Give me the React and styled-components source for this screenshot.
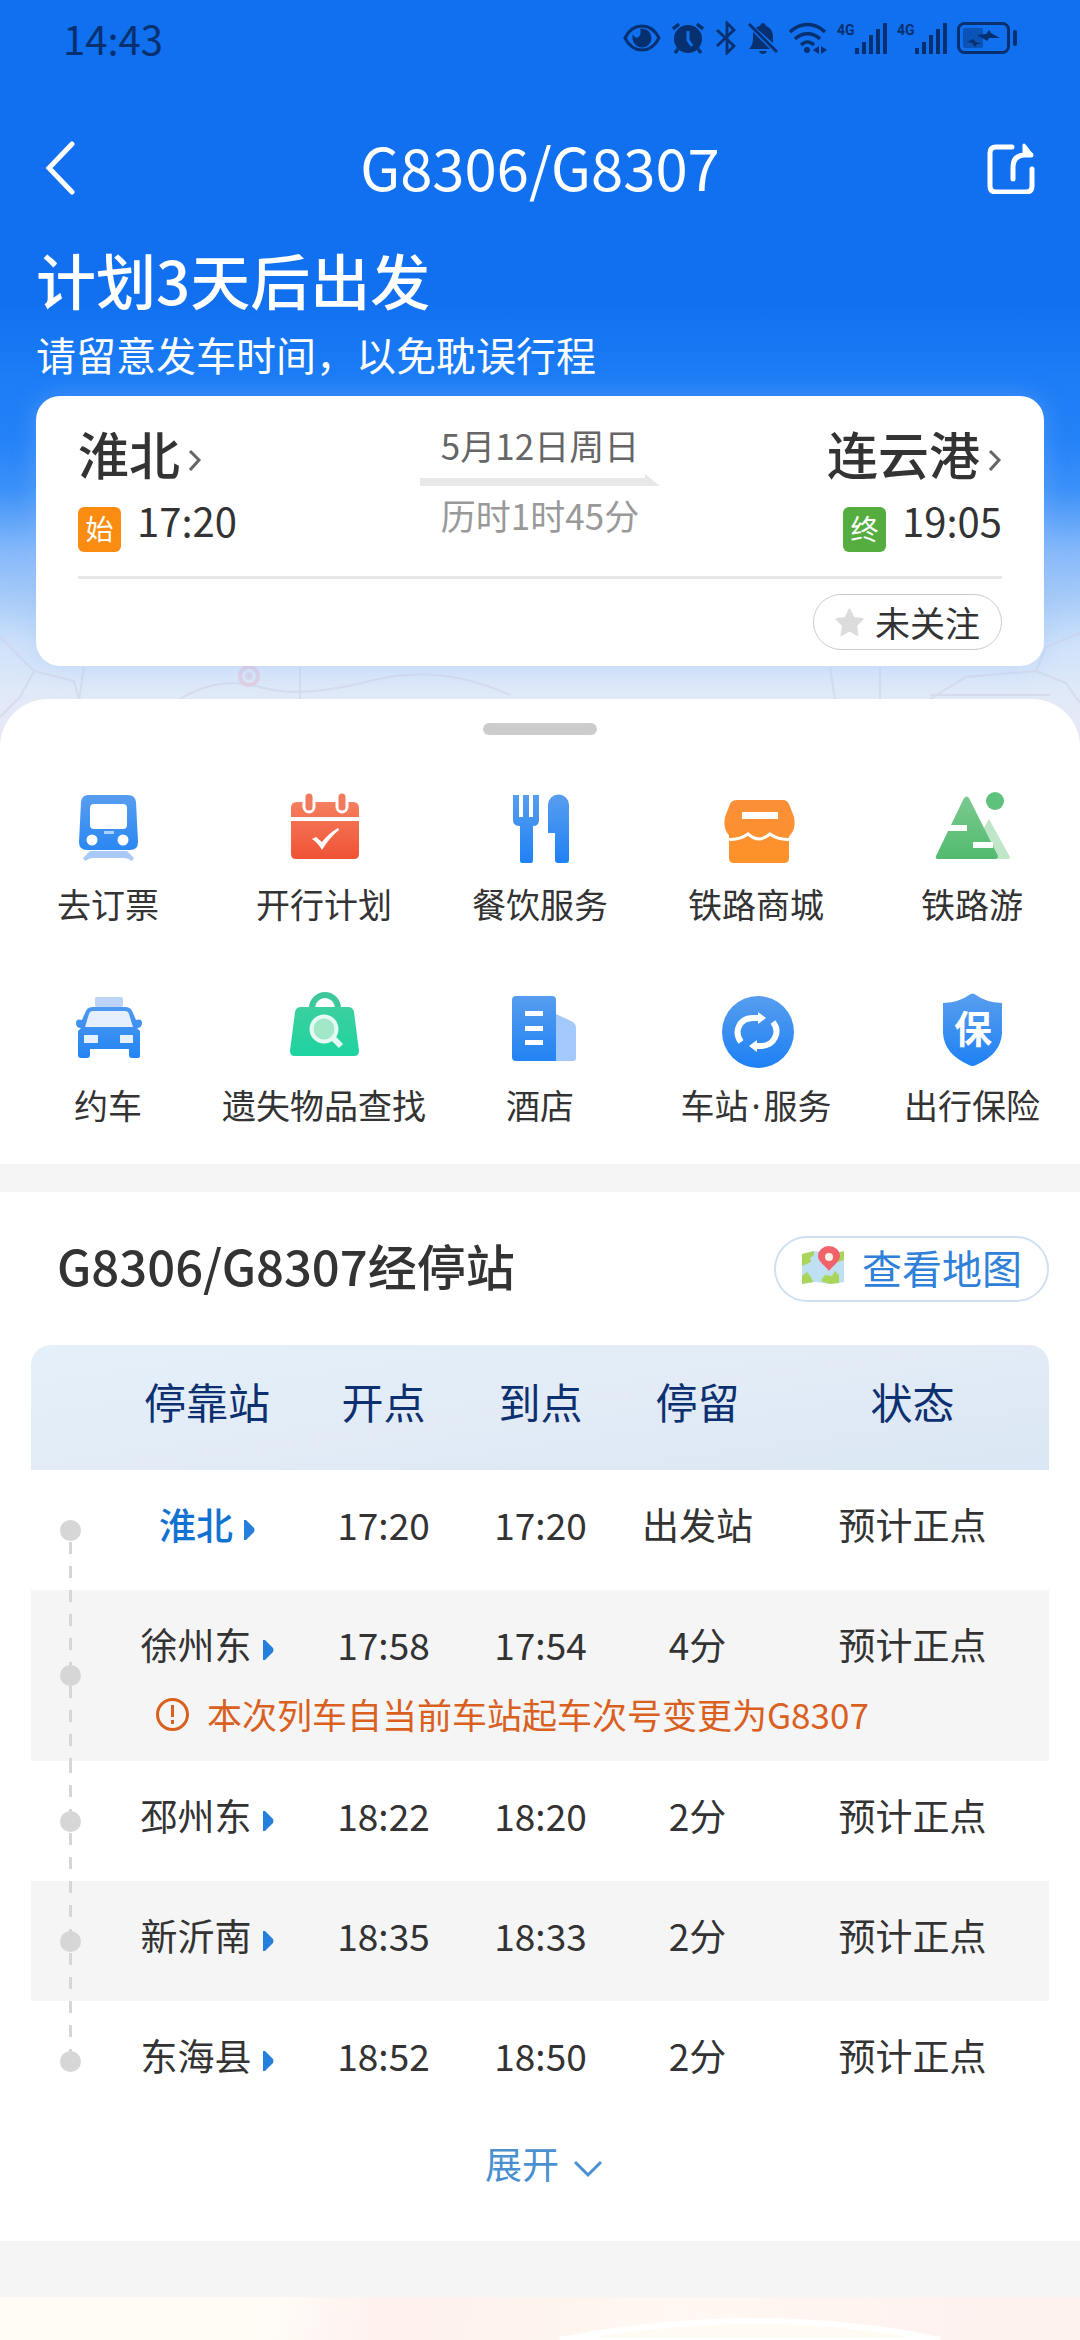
import React from "react";
import styled, { createGlobalStyle } from "styled-components";

const GlobalStyle = createGlobalStyle`
  * { box-sizing: border-box; }
  body {
    margin: 0;
    background: #fff;
    color: #333;
    font-family: "Noto Sans CJK SC", "Noto Sans", sans-serif;
  }
  h1, h2, p { margin: 0; font-weight: 400; }
  button {
    margin: 0;
    padding: 0;
    border: 0;
    background: none;
    color: inherit;
    font: inherit;
    cursor: pointer;
  }
  a { color: inherit; text-decoration: none; }
  svg { display: block; flex: none; }
`;

const Page = styled.main`
  overflow-x: hidden;
`;

/* ---------- hero ---------- */

const Hero = styled.header`
  position: relative;
  padding: 0 36px 81px;
  color: #fff;
  background: linear-gradient(
    #1070f0 0, #1070f0 300px, #1c7df6 380px, #2482f8 440px, #3c91f8 490px,
    #84b8fa 550px, #a9ccf8 600px, #cfe2fa 645px, #dfe9f8 690px, #ece9f5 747px
  );
`;

const MapTrace = styled.svg`
  position: absolute;
  left: 0;
  bottom: 0;
  width: 100%;
  height: 140px;
`;

const StatusBar = styled.div`
  display: flex;
  align-items: center;
  justify-content: space-between;
  height: 75px;
  padding: 0 27px;
  color: #06306f;
  font-size: 40px;
  line-height: 60px;
`;

const StatusIcons = styled.div`
  display: flex;
  align-items: center;
  gap: 10px;
`;

const NavBar = styled.nav`
  display: grid;
  grid-template-columns: 60px 1fr 60px;
  align-items: center;
  height: 149px;
  margin-top: 18px;
  padding: 0 9px;
`;

const NavTitle = styled.h1`
  padding-bottom: 4px;
  font-size: 58px;
  line-height: 80px;
  text-align: center;
`;

const NavButton = styled.button`
  display: flex;
  justify-content: ${(p) => p.$align};
`;

const Headline = styled.h2`
  position: relative;
  font-size: 60px;
  font-weight: 500;
  line-height: 74px;
`;

const Subline = styled.p`
  position: relative;
  margin-top: 10px;
  font-size: 40px;
  line-height: 56px;
`;

const TripCard = styled.section`
  position: relative;
  margin-top: 14px;
  padding: 27px 42px 16px;
  border-radius: 24px;
  background: #fff;
  color: #333;
  box-shadow: 0 0 24px rgba(150, 190, 250, 0.35);
`;

const Trip = styled.div`
  display: grid;
  grid-template-columns: 1fr 240px 1fr;
  padding-bottom: 24px;
  border-bottom: 3px solid #e6e6e6;
`;

const End = styled.div`
  display: flex;
  flex-direction: column;
  align-items: ${(p) => p.$align};
  gap: 5px;
`;

const Station = styled.a`
  font-size: 51px;
  font-weight: 500;
  line-height: 60px;
  svg { display: inline-block; margin-left: 8px; vertical-align: baseline; }
`;

const EndTime = styled.div`
  display: flex;
  align-items: flex-end;
  gap: 16px;
  font-size: 40px;
  line-height: 64px;
`;

const Badge = styled.span`
  width: 43px;
  height: 45px;
  border-radius: 6px;
  background: ${(p) => p.$color};
  color: #fff;
  font-size: 28px;
  line-height: 42px;
  text-align: center;
`;

const Middle = styled.div`
  display: flex;
  flex-direction: column;
  align-items: center;
  gap: 7px;
  font-size: 35px;
  line-height: 44px;
`;

const TripDate = styled.span`
  color: #666;
`;

const Duration = styled.span`
  color: #999;
`;

const CardFooter = styled.div`
  display: flex;
  justify-content: flex-end;
  padding-top: 15px;
`;

const FollowButton = styled.button`
  display: flex;
  align-items: center;
  gap: 11px;
  height: 56px;
  padding: 0 21px;
  border: 1px solid #ccc;
  border-radius: 28px;
  font-size: 35px;
  line-height: 50px;
`;

/* ---------- services ---------- */

const Sheet = styled.section`
  position: relative;
  margin-top: -48px;
  padding: 24px 0 37px;
  border-radius: 48px 48px 0 0;
  background: #fff;
`;

const Handle = styled.div`
  width: 114px;
  height: 12px;
  margin: 0 auto 55px;
  border-radius: 6px;
  background: #ccc;
`;

const ServiceGrid = styled.div`
  display: grid;
  grid-template-columns: repeat(5, 1fr);
  row-gap: 65px;
`;

const Service = styled.a`
  display: flex;
  flex-direction: column;
  align-items: center;
  gap: 12px;
  font-size: 34px;
  line-height: 44px;
  white-space: nowrap;
`;

const Separator = styled.span`
  margin: 0 3px;
  font-family: "Noto Sans", sans-serif;
  line-height: 1;
`;

const Band = styled.div`
  height: ${(p) => p.$height}px;
  background: #f5f5f5;
`;

/* ---------- stops ---------- */

const Stops = styled.section`
  padding: 44px 31px 36px;
  background: #fff;
`;

const StopsHead = styled.div`
  display: flex;
  align-items: flex-start;
  justify-content: space-between;
  margin-bottom: 43px;
  padding-left: 26px;
`;

const StopsTitle = styled.h2`
  font-size: 49px;
  font-weight: 500;
  line-height: 58px;
`;

const MapButton = styled.button`
  display: flex;
  align-items: center;
  gap: 17px;
  height: 66px;
  padding: 0 25px 4px;
  border: 2px solid #cfe0f2;
  border-radius: 33px;
  color: #2f80d8;
  font-size: 40px;
  line-height: 56px;
`;

const Table = styled.table`
  width: 100%;
  table-layout: fixed;
  border-collapse: separate;
  border-spacing: 0;
  border-radius: 20px 20px 0 0;
  overflow: hidden;
  font-size: 37px;
  line-height: 46px;
  text-align: center;
`;

const Col = styled.col`
  width: ${(p) => p.$width};
`;

const StopHead = styled.thead`
  background: linear-gradient(172deg, #e5f0fb, #e2ebf6 50%, #dbe7f4);
`;

const HeadCell = styled.th`
  height: 125px;
  padding: 0 0 14px;
  color: #0d3070;
  font-size: 42px;
  font-weight: 400;
  line-height: 60px;
`;

const StopGroup = styled.tbody`
  --row: ${(p) => (p.$shaded ? "#f5f5f5" : "#fff")};
  background: var(--row);
`;

const Cell = styled.td`
  height: ${(p) => (p.$short ? 94 : 120)}px;
  padding: 31px 0 0;
  vertical-align: top;
  white-space: nowrap;
`;

const dashes =
  "repeating-linear-gradient(#d6d6d6 0 12px, transparent 12px 24px) center top / 3px 100% no-repeat";
const cover = (edge) =>
  `linear-gradient(var(--row), var(--row)) center ${edge} / 100% 50% no-repeat, `;

const RailCell = styled.td`
  padding: 0;
  vertical-align: middle;
  background: ${(p) =>
    (p.$end === "first" ? cover("top") : p.$end === "last" ? cover("bottom") : "") + dashes};
`;

const Dot = styled.span`
  display: block;
  width: 21px;
  height: 21px;
  margin: 0 auto;
  border-radius: 50%;
  background: #d6d6d6;
`;

const StopLink = styled.a`
  color: ${(p) => (p.$active ? "#1272d2" : "#333")};
  font-weight: ${(p) => (p.$active ? 500 : 400)};
  svg { display: inline-block; margin-left: 10px; vertical-align: baseline; }
`;

const NoteCell = styled.td`
  height: 77px;
  padding: 8px 0 0 46px;
  vertical-align: top;
`;

const Note = styled.div`
  display: flex;
  align-items: center;
  gap: 17px;
  color: #d9601f;
  font-size: 35px;
  line-height: 44px;
  white-space: nowrap;
`;

const ExpandButton = styled.button`
  display: flex;
  align-items: center;
  justify-content: center;
  gap: 14px;
  width: 100%;
  height: 84px;
  padding-left: 8px;
  color: #4a90d0;
  font-size: 37px;
  line-height: 46px;
`;

const Promo = styled.div`
  height: 43px;
  overflow: hidden;
  background: linear-gradient(100deg, #fffcf6 0 24%, #fef1ee 36%, #fef4ee 50%, #fff8f2 62%, #fef2ef 90%);
`;

/* ---------- status icons ---------- */

const EyeIcon = () => (
  <svg width="38" height="34" viewBox="0 0 38 34" fill="none" stroke="currentColor" strokeWidth="3">
    <path d="M2 17C10 1 28 1 36 17C28 33 10 33 2 17Z" />
    <path d="M19 9a8 8 0 1 1-8 8c3 3 9 0 8-8z" fill="currentColor" />
  </svg>
);

const AlarmIcon = () => (
  <svg width="34" height="34" viewBox="0 0 34 34" fill="none" stroke="currentColor" strokeWidth="3.4">
    <circle cx="17" cy="18" r="14" fill="currentColor" stroke="none" />
    <path d="M2 8l6-5M32 8l-6-5M7 28l-3 4M27 28l3 4" />
    <path d="M17 10v9l4 6" stroke="#1070f0" strokeWidth="3" />
  </svg>
);

const BluetoothIcon = () => (
  <svg width="22" height="34" viewBox="0 0 22 34" fill="none" stroke="currentColor" strokeWidth="2.8">
    <path d="M2 9l17 16-7 7V2l7 7L2 25" />
  </svg>
);

const MuteIcon = () => (
  <svg width="32" height="34" viewBox="0 0 32 34" fill="currentColor">
    <path d="M9 7c1-1 2-2 4-2 1-4 5-4 6 0 5 2 7 6 7 11v6z" />
    <path d="M6 11l17 17H2c3-3 4-6 4-10zM12 30h8c-1 4-7 4-8 0z" />
    <path d="M2 3l28 28" stroke="currentColor" strokeWidth="3" />
  </svg>
);

const WifiIcon = () => (
  <svg width="38" height="34" viewBox="0 0 38 34" fill="none" stroke="currentColor" strokeWidth="3.4">
    <path d="M1 11C11 1 26 1 36 11M6 18c7-7 18-7 25 0M12 24c4-4 9-4 13 0" />
    <circle cx="18" cy="29" r="3" fill="currentColor" stroke="none" />
    <path d="M24 29l6-4v8zM38 29l-6-4v8z" fill="currentColor" stroke="none" />
  </svg>
);

const SignalWrap = styled.span`
  display: flex;
  align-items: flex-start;
  justify-content: space-between;
  width: 50px;
  height: 34px;
  font: 700 14px/18px Roboto, "Noto Sans", sans-serif;
`;

const Signal = () => (
  <SignalWrap>
    4G
    <svg width="32" height="34" viewBox="1 0 32 34" fill="currentColor">
      <path d="M1 27h4v6H1zM8 21h4v12H8zM15 14h4v19h-4zM22 8h4v25h-4zM29 2h4v31h-4z" />
    </svg>
  </SignalWrap>
);

const BatteryIcon = () => (
  <svg width="60" height="34" viewBox="0 0 60 34">
    <rect x="1.5" y="2.5" width="50" height="29" rx="6" fill="none" stroke="currentColor" strokeWidth="3" />
    <rect x="6" y="7" width="20" height="20" rx="2" fill="currentColor" opacity="0.45" />
    <path d="M32 9l-3 4-9 1 7 4 3 2 2-3h11l-9-5zM16 18l-6 3 5 1 3 4 2-3h5l-6-2z" fill="currentColor" />
    <rect x="56" y="9" width="4" height="16" rx="2" fill="currentColor" />
  </svg>
);

/* ---------- small icons ---------- */

const BackIcon = () => (
  <svg width="30" height="54" viewBox="0 0 30 54" fill="none" stroke="currentColor" strokeWidth="5" strokeLinecap="round">
    <path d="M27 3L4 27l23 24" />
  </svg>
);

const ShareIcon = () => (
  <svg width="48" height="52" viewBox="0 0 48 52" fill="none" stroke="currentColor" strokeWidth="5" strokeLinecap="round" strokeLinejoin="round">
    <path d="M25 5H9q-6 0-6 6v33q0 6 6 6h30q6 0 6-6V27" />
    <path d="M26 37V25q0-11 11-12h7" />
    <path d="M37 3l7 9-7 1z" fill="currentColor" strokeWidth="3" />
  </svg>
);

const NameChevron = () => (
  <svg width="14" height="26" viewBox="0 0 14 26" fill="none" stroke="#666" strokeWidth="3">
    <path d="M2 2l9 9-9 10" />
  </svg>
);

const LongArrow = () => (
  <svg width="240" height="12" viewBox="0 0 240 12" fill="#e8e8e8">
    <path d="M0 4h225V0l15 12H0z" />
  </svg>
);

const StarIcon = () => (
  <svg width="29" height="29" viewBox="0 0 29 29" fill="#dcdcdc" stroke="#dcdcdc" strokeWidth="2" strokeLinejoin="round">
    <path d="M14.5 1.500l4 8.500 9 1-6.500 6.500 1.500 9.500-8-4.500-8 4.500L8 17.500 1.500 11l9-1z" />
  </svg>
);

const MapIcon = () => (
  <svg width="44" height="42" viewBox="0 0 44 42">
    <path d="M1 8l14-3 14 3 14-3v31l-14 2-14-2-14 2z" fill="#bfe0f2" />
    <path d="M1 8l12-3v4l-4 3 1 4-9 4zM1 30l5-4 4 5 2 5-11 2zM20 34l4-5 7 1 3-5 4 4v8l-9 1-7-2zM36 7l7-2v9l-6 2z" fill="#a9d65a" />
    <path d="M28 25c-3-5-11-9-11-15a11 10 0 0 1 22 0c0 6-8 10-11 15z" fill="#f2626a" />
    <circle cx="28" cy="11" r="4" fill="#fff0e8" />
  </svg>
);

const StopArrow = () => (
  <svg width="12" height="20" viewBox="0 0 12 20" fill="#2480dc">
    <path d="M1 0h2l8 8q1 2 0 4l-8 8H1z" />
  </svg>
);

const AlertIcon = () => (
  <svg width="35" height="35" viewBox="0 0 35 35" fill="none" stroke="currentColor" strokeWidth="3">
    <circle cx="17.5" cy="17.5" r="15" />
    <path d="M17.5 8v12M17.5 23v4" />
  </svg>
);

const DownIcon = () => (
  <svg width="30" height="30" viewBox="0 0 30 30" fill="none" stroke="currentColor" strokeWidth="3">
    <path d="M2 14l13 13 13-13" />
  </svg>
);

/* ---------- service icons ---------- */

const Gradient = ({ id, from, to }) => (
  <linearGradient id={id} x1="0" y1="0" x2="0" y2="80" gradientUnits="userSpaceOnUse">
    <stop offset="0" stopColor={from} />
    <stop offset="1" stopColor={to} />
  </linearGradient>
);

const Tile = ({ children }) => (
  <svg width="80" height="80" viewBox="0 0 80 80">
    <defs>
      <Gradient id="blue" from="#5b9fee" to="#1a7ff5" />
      <Gradient id="red" from="#f68868" to="#ef4a2c" />
      <Gradient id="orange" from="#f98f3c" to="#ff9226" />
      <Gradient id="green" from="#7fcb93" to="#4bb868" />
      <Gradient id="mint" from="#45cf9f" to="#14d4a0" />
    </defs>
    {children}
  </svg>
);

const TrainIcon = () => (
  <Tile>
    <path d="M20 5h40q7 0 8 7l2 40q0 8-8 8H19q-8 0-8-8l2-40q1-7 7-7z" fill="url(#blue)" />
    <rect x="22" y="14" width="37" height="25" rx="4" fill="#fff" />
    <rect x="36" y="41" width="10" height="3" fill="#a8d4ff" />
    <circle cx="24" cy="50" r="5.5" fill="#fff" />
    <circle cx="55" cy="50" r="5.5" fill="#fff" />
    <path d="M22 61h37l7 7-2 3q-4-3-8-3H25q-4 0-8 3l-2-3z" fill="#a9c9f7" />
  </Tile>
);

const PlanIcon = () => (
  <Tile>
    <path d="M13 12h56q6 0 6 6v9H7v-9q0-6 6-6zM7 31h68v33q0 5-5 5H12q-5 0-5-5z" fill="url(#red)" />
    <path d="M25 4v13M58 4v13" stroke="#fff" strokeWidth="13" strokeLinecap="round" />
    <path d="M25 7v10M58 7v10" stroke="#f07a5c" strokeWidth="7" strokeLinecap="round" />
    <path d="M28 49l4-2 6 5q7-9 16-14l1 2q-9 7-17 20-4-7-10-11z" fill="#fff" />
  </Tile>
);

const DiningIcon = () => (
  <Tile>
    <path d="M13 5h6v22h4V5h6v22h4V5h6v25q0 6-6 6v35q0 2-2 2H22q-2 0-2-2V36q-7 0-7-6z" fill="url(#blue)" />
    <path d="M48 15a10 10 0 0 1 21 0v55q0 3-3 3h-8q-3 0-3-3V43h-7z" fill="url(#blue)" />
  </Tile>
);

const MallIcon = () => (
  <Tile>
    <path d="M13 42h60v26q0 5-5 5H18q-5 0-5-5z" fill="url(#orange)" />
    <path d="M21 10h46q4 0 6 4l5 13q2 11-3 17-3 5-8 4H20q-5 1-8-4-5-6-3-17l5-13q2-4 7-4z" fill="url(#orange)" />
    <rect x="26" y="22" width="36" height="7" fill="#fff" />
    <path d="M10 49q12 2 22-5 6 5 11 5t11-5q10 7 23 5" fill="none" stroke="#fff" strokeWidth="3" />
  </Tile>
);

const TourIcon = () => (
  <Tile>
    <path d="M57 29l21 38q0 2-2 2H60L48 45z" fill="#bfe6c9" />
    <path d="M32 8q3-3 5 0l29 58q0 3-3 3H6q-3 0-2-3z" fill="url(#green)" />
    <circle cx="63" cy="11" r="9" fill="#5fc27c" />
    <path d="M14 35h21v6H14zM41 52h20v6H41z" fill="#fff" />
  </Tile>
);

const CarIcon = () => (
  <Tile>
    <rect x="27" y="6" width="28" height="10" rx="2" fill="#bdd3f8" />
    <path d="M24 16h34q5 0 7 6l3 7q6-2 6 3t-5 5l3 3v25q0 2-3 2h-5q-3 0-3-3v-6H22v6q0 3-3 3h-6q-3 0-3-3V40l3-3q-5 0-5-5t6-3l3-7q2-6 7-6z" fill="url(#blue)" />
    <path d="M25 20h32q3 0 4 3l4 13H17l4-13q1-3 4-3z" fill="#e6effd" />
    <path d="M16 44h14v8H16zM52 44h13v8H52z" fill="#e6f1ff" />
  </Tile>
);

const LostIcon = () => (
  <Tile>
    <path d="M28 17a13 13 0 0 1 26 0" fill="none" stroke="#3fc79c" strokeWidth="6" />
    <path d="M17 16h47q5 0 6 5l5 39q0 5-5 5H11q-5 0-5-5l5-39q1-5 6-5z" fill="url(#mint)" />
    <circle cx="40" cy="38" r="12.5" fill="#a2e8c8" stroke="#e4faf2" strokeWidth="4" />
    <path d="M49 47l8 8" stroke="#e4faf2" strokeWidth="6" />
  </Tile>
);

const HotelIcon = () => (
  <Tile>
    <path d="M56 23l17 8q3 2 3 5v31q0 3-3 3H56z" fill="#a3c8fb" />
    <path d="M16 5h36q4 0 4 4v61H16q-4 0-4-4V9q0-4 4-4z" fill="url(#blue)" />
    <path d="M25 20h18v5H25zM25 35h18v5H25zM25 49h18v5H25z" fill="#fff" />
  </Tile>
);

const StationServiceIcon = () => (
  <Tile>
    <circle cx="42" cy="41" r="36" fill="url(#blue)" />
    <path d="M25 51C17 40 24 27 37 27h6M57 31c8 10 1 24-12 24h-6" fill="none" stroke="#fff" strokeWidth="6" />
    <path d="M42 21l8 6-8 6zM41 49l-8 6 8 6z" fill="#fff" />
  </Tile>
);

const InsuranceIcon = () => (
  <Tile>
    <path d="M37 4q4-3 7 0 9 7 26 8v30q-1 21-26 32-3 2-7 0-25-11-26-32V12q17-1 26-8z" fill="url(#blue)" />
    <text x="41" y="52" textAnchor="middle" fontSize="38" fontWeight="700" fill="#fff">保</text>
  </Tile>
);

/* ---------- data ---------- */

const services = [
  ["去订票", TrainIcon],
  ["开行计划", PlanIcon],
  ["餐饮服务", DiningIcon],
  ["铁路商城", MallIcon],
  ["铁路游", TourIcon],
  ["约车", CarIcon],
  ["遗失物品查找", LostIcon],
  ["酒店", HotelIcon],
  ["车站·服务", StationServiceIcon],
  ["出行保险", InsuranceIcon],
];

const stops = [
  { name: "淮北", depart: "17:20", arrive: "17:20", stay: "出发站", active: true },
  { name: "徐州东", depart: "17:58", arrive: "17:54", stay: "4分", note: "本次列车自当前车站起车次号变更为G8307" },
  { name: "邳州东", depart: "18:22", arrive: "18:20", stay: "2分" },
  { name: "新沂南", depart: "18:35", arrive: "18:33", stay: "2分" },
  { name: "东海县", depart: "18:52", arrive: "18:50", stay: "2分" },
];

const columns = ["停靠站", "开点", "到点", "停留", "状态"];

function ServiceLabel({ text }) {
  const [head, tail] = text.split("·");
  return (
    <span>
      {head}
      {tail && <Separator>·</Separator>}
      {tail}
    </span>
  );
}

function Stop({ stop, index }) {
  const end = index === 0 ? "first" : index === stops.length - 1 ? "last" : "";
  const short = Boolean(stop.note);
  return (
    <StopGroup $shaded={index % 2 === 1}>
      <tr>
        <RailCell $end={end} rowSpan={short ? 2 : 1}>
          <Dot />
        </RailCell>
        <Cell $short={short}>
          <StopLink href="#stop" $active={stop.active}>
            {stop.name}
            <StopArrow />
          </StopLink>
        </Cell>
        <Cell $short={short}>{stop.depart}</Cell>
        <Cell $short={short}>{stop.arrive}</Cell>
        <Cell $short={short}>{stop.stay}</Cell>
        <Cell $short={short}>预计正点</Cell>
      </tr>
      {stop.note && (
        <tr>
          <NoteCell colSpan={5}>
            <Note>
              <AlertIcon />
              {stop.note}
            </Note>
          </NoteCell>
        </tr>
      )}
    </StopGroup>
  );
}

export default function App() {
  return (
    <Page>
      <GlobalStyle />
      <Hero>
        <MapTrace viewBox="0 0 1080 140" preserveAspectRatio="none" fill="none" stroke="#cfcfe6" strokeWidth="2" opacity="0.5">
          <path d="M0 30l14 14 20 20L20 90 0 110M34 64l40 10 8 30M84 60l-6 40M180 92q40-24 80-12t110-6 140 14M300 60v50M830 60l6 40M880 60v40" />
          <path d="M930 92l36-22 70-6 10-24 34-14M1036 64l30 12 14 20M930 88h120" />
          <circle cx="249" cy="69" r="9" stroke="#e2b9d2" strokeWidth="4" />
          <circle cx="249" cy="69" r="3" fill="#e2b9d2" />
        </MapTrace>
        <StatusBar>
          <span>14:43</span>
          <StatusIcons>
            <EyeIcon />
            <AlarmIcon />
            <BluetoothIcon />
            <MuteIcon />
            <WifiIcon />
            <Signal />
            <Signal />
            <BatteryIcon />
          </StatusIcons>
        </StatusBar>
        <NavBar>
          <NavButton $align="flex-start" aria-label="返回">
            <BackIcon />
          </NavButton>
          <NavTitle>G8306/G8307</NavTitle>
          <NavButton $align="flex-end" aria-label="分享">
            <ShareIcon />
          </NavButton>
        </NavBar>
        <Headline>计划3天后出发</Headline>
        <Subline>请留意发车时间，以免耽误行程</Subline>
        <TripCard>
          <Trip>
            <End $align="flex-start">
              <Station href="#from">
                淮北
                <NameChevron />
              </Station>
              <EndTime>
                <Badge $color="#fb8c12">始</Badge>
                <span>17:20</span>
              </EndTime>
            </End>
            <Middle>
              <TripDate>5月12日周日</TripDate>
              <LongArrow />
              <Duration>历时1时45分</Duration>
            </Middle>
            <End $align="flex-end">
              <Station href="#to">
                连云港
                <NameChevron />
              </Station>
              <EndTime>
                <Badge $color="#55ad3f">终</Badge>
                <span>19:05</span>
              </EndTime>
            </End>
          </Trip>
          <CardFooter>
            <FollowButton>
              <StarIcon />
              未关注
            </FollowButton>
          </CardFooter>
        </TripCard>
      </Hero>

      <Sheet>
        <Handle />
        <ServiceGrid>
          {services.map(([label, Icon]) => (
            <Service href="#service" key={label}>
              <Icon />
              <ServiceLabel text={label} />
            </Service>
          ))}
        </ServiceGrid>
      </Sheet>
      <Band $height={28} />

      <Stops>
        <StopsHead>
          <StopsTitle>G8306/G8307经停站</StopsTitle>
          <MapButton>
            <MapIcon />
            查看地图
          </MapButton>
        </StopsHead>
        <Table>
          <colgroup>
            <Col $width="78px" />
            <Col $width="196px" />
            <Col $width="157px" />
            <Col $width="157px" />
            <Col $width="157px" />
            <Col $width="auto" />
          </colgroup>
          <StopHead>
            <tr>
              <HeadCell aria-label="线路" />
              {columns.map((name) => (
                <HeadCell key={name}>{name}</HeadCell>
              ))}
            </tr>
          </StopHead>
          {stops.map((stop, index) => (
            <Stop key={stop.name} stop={stop} index={index} />
          ))}
        </Table>
        <ExpandButton>
          展开
          <DownIcon />
        </ExpandButton>
      </Stops>
      <Band $height={56} />
      <Promo>
        <svg width="100%" height="43" viewBox="0 0 1080 43" preserveAspectRatio="none">
          <path d="M560 43q200-38 380 0z" fill="#fffaf2" stroke="#fff" strokeWidth="6" />
        </svg>
      </Promo>
    </Page>
  );
}
